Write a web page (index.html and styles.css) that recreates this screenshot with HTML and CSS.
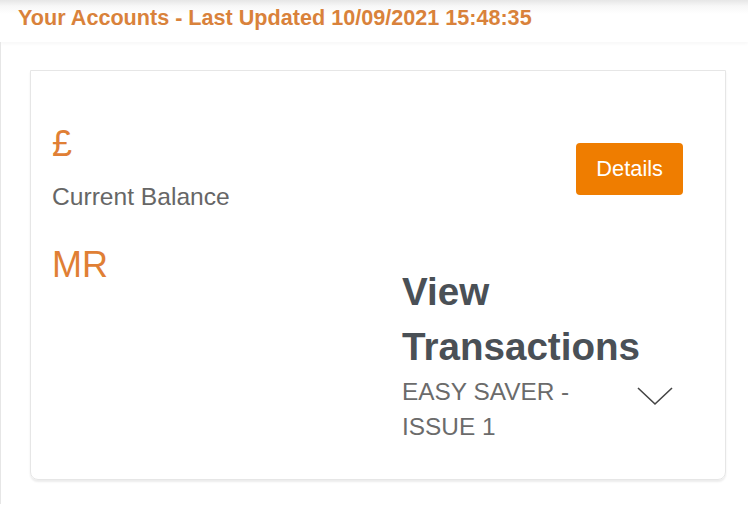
FILE: index.html
```html
<!DOCTYPE html>
<html lang="en">
<head>
    <meta charset="UTF-8">
    <meta name="viewport" content="width=device-width, initial-scale=1.0">
    <title>Your Accounts</title>
    <link rel="stylesheet" href="styles.css">
</head>
<body>
    <div class="topbar">Your Accounts - Last Updated 10/09/2021 15:48:35</div>
    <div class="page">
        <div class="card">
            <div class="balance">
                <div class="amount">£</div>
                <div class="label">Current Balance</div>
                <div class="holder">MR</div>
            </div>
            <div class="actions">
                <button class="details-btn">Details</button>
                <h2 class="view-title">View Transactions</h2>
                <div class="account-row">
                    <span class="account-name">EASY SAVER - ISSUE 1</span>
                    <svg class="chevron" width="36" height="20" viewBox="0 0 36 20">
                        <path d="M1 2 L18 18 L35 2" fill="none" stroke="#444" stroke-width="1.6"/>
                    </svg>
                </div>
            </div>
        </div>
    </div>
</body>
</html>
```

FILE: styles.css
```css
body {
    margin: 0;
    font-family: "Liberation Sans", Arial, sans-serif;
    background: white;
}
.topbar {
    height: 42px;
    padding-left: 18px;
    font-size: 21.6px;
    font-weight: bold;
    line-height: 35px;
    color: #d9823b;
    background: linear-gradient(#e6e6e6 0, #f7f7f7 6px, #fff 14px);
    box-shadow: 0 2px 3px rgba(0,0,0,0.03);
}
.page {
    border-left: 1px solid #e6e6e6;
    padding: 28px 22px 24px 29px;
}
.card {
    display: flex;
    border: 1px solid #e6e6e6;
    border-radius: 0 0 8px 8px;
    box-shadow: 0 2px 2px rgba(0,0,0,0.08);
    padding: 47px 20px 35px 21px;
    line-height: 1.45;
}
.balance {
    width: 350px;
}
.amount, .holder {
    font-size: 36px;
    color: #e07f35;
}
.label {
    font-size: 24.6px;
    color: #666;
    margin-top: 9px;
}
.holder {
    margin-top: 24px;
}
.actions {
    flex: 1;
    display: flex;
    flex-direction: column;
    align-items: flex-start;
}
.details-btn {
    align-self: flex-end;
    margin: 25px 22px 0 0;
    height: 52px;
    padding: 0 20px;
    font-family: inherit;
    font-size: 21.8px;
    color: white;
    background-color: #ef7d00;
    border: none;
    border-radius: 4px;
}
.view-title {
    margin: 69px 0 0 0;
    font-size: 38.6px;
    line-height: 55px;
    color: #4a5056;
}
.account-row {
    display: flex;
    align-items: flex-start;
}
.account-name {
    width: 200px;
    font-size: 24.4px;
    line-height: 35px;
    color: #6b6b6b;
}
.chevron {
    margin: 12px 0 0 35px;
}
```
